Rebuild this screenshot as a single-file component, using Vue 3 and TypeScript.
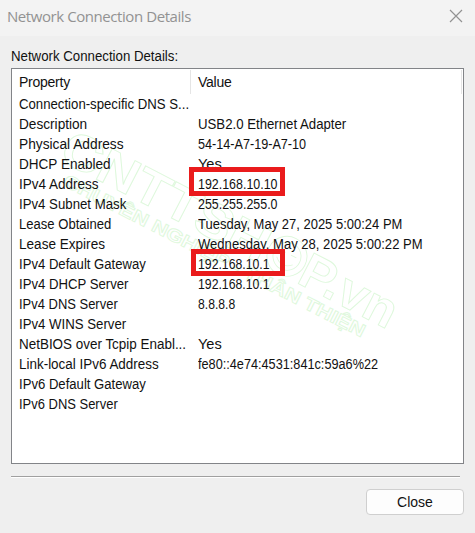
<script setup lang="ts">
interface Cell {
  text: string
  stretch: number
}

interface Detail {
  property: Cell
  value: Cell
}

const cell = (text: string, stretch = 1): Cell => ({ text, stretch })

const details: Detail[] = [
  { property: cell('Connection-specific DNS S...', 0.942), value: cell('') },
  { property: cell('Description', 0.974), value: cell('USB2.0 Ethernet Adapter', 0.943) },
  { property: cell('Physical Address', 0.981), value: cell('54-14-A7-19-A7-10', 0.902) },
  { property: cell('DHCP Enabled', 0.968), value: cell('Yes', 1.04) },
  { property: cell('IPv4 Address', 0.965), value: cell('192.168.10.10', 0.888) },
  { property: cell('IPv4 Subnet Mask', 0.944), value: cell('255.255.255.0', 0.888) },
  { property: cell('Lease Obtained', 0.933), value: cell('Tuesday, May 27, 2025 5:00:24 PM', 0.928) },
  { property: cell('Lease Expires', 0.969), value: cell('Wednesday, May 28, 2025 5:00:22 PM', 0.933) },
  { property: cell('IPv4 Default Gateway', 0.937), value: cell('192.168.10.1', 0.875) },
  { property: cell('IPv4 DHCP Server', 0.94), value: cell('192.168.10.1', 0.875) },
  { property: cell('IPv4 DNS Server', 0.926), value: cell('8.8.8.8', 0.868) },
  { property: cell('IPv4 WINS Server', 0.944), value: cell('') },
  { property: cell('NetBIOS over Tcpip Enabl...', 0.96), value: cell('Yes', 1.04) },
  { property: cell('Link-local IPv6 Address', 0.96), value: cell('fe80::4e74:4531:841c:59a6%22', 0.907) },
  { property: cell('IPv6 Default Gateway', 0.937), value: cell('') },
  { property: cell('IPv6 DNS Server', 0.926), value: cell('') },
]
</script>

<template>
  <main class="dialog">
    <header class="titlebar">
      <h1 class="title">Network Connection Details</h1>
      <button class="dismiss" aria-label="Close window">
        <svg width="14" height="14" viewBox="0 0 14 14">
          <path d="M1 1L13 13M13 1L1 13" fill="none" stroke="#929292" stroke-width="1.2" />
        </svg>
      </button>
    </header>
    <section class="body">
      <p class="label">Network Connection Details:</p>
      <div class="list">
        <svg class="watermark" width="451" height="394" viewBox="12 69 451 394">
          <g fill="none" stroke="#def8dc" stroke-width="0.9">
            <g transform="translate(57 159) rotate(27.3)" class="brand">
              <text x="0" y="0" font-size="50" textLength="228" lengthAdjust="spacingAndGlyphs">CNTTSH</text>
              <circle cx="249" cy="-19" r="20" />
              <circle cx="249" cy="-19" r="14" />
              <path d="M240 -22h6M252 -22h6M240 -14q9 9 18 0" />
              <text x="268" y="0" font-size="50" textLength="104" lengthAdjust="spacingAndGlyphs">P.vn</text>
            </g>
            <g transform="translate(62 185) rotate(27)" class="brand">
              <text x="0" y="0" font-size="18" textLength="336" lengthAdjust="spacingAndGlyphs">CHUYÊN NGHIỆP - THÂN THIỆN</text>
            </g>
          </g>
        </svg>
        <div class="columns">
          <span class="head">Property</span>
          <span class="head">Value</span>
        </div>
        <div v-for="item in details" :key="item.property.text" class="row">
          <span :style="{ transform: `scaleX(${item.property.stretch})` }">{{ item.property.text }}</span>
          <span :style="{ transform: `scaleX(${item.value.stretch})` }">{{ item.value.text }}</span>
        </div>
        <i class="mark address"></i>
        <i class="mark gateway"></i>
      </div>
      <hr class="divider" />
      <footer class="actions">
        <button class="close">Close</button>
      </footer>
    </section>
  </main>
</template>

<style>
body {
  margin: 0;
  background: #efefef;
}
</style>

<style scoped>
.dialog {
  box-sizing: border-box;
  width: 475px;
  height: 533px;
  overflow: hidden;
  background: #efefef;
  color: #111;
  font: 14px/20px "Liberation Sans", Arial, sans-serif;
}
.titlebar {
  display: flex;
  box-sizing: border-box;
  height: 36px;
  padding: 0 12px 5px 7px;
  align-items: center;
  justify-content: space-between;
  background: #f3f3f3;
}
.title {
  margin: 0;
  color: #929292;
  font: 400 15px/20px "Open Sans", "Noto Sans", sans-serif;
  letter-spacing: -0.43px;
}
.dismiss {
  display: flex;
  padding: 0;
  border: 0;
  background: none;
}
.body {
  padding: 10px 11px 0;
}
.label {
  margin: 0 0 2px;
  transform: scaleX(0.946);
  transform-origin: 0 50%;
}
.list {
  position: relative;
  box-sizing: border-box;
  width: 453px;
  height: 396px;
  border: 1px solid #828488;
  background: #fff;
}
.columns,
.row {
  position: relative;
  display: grid;
  grid-template-columns: 179px 1fr;
}
.columns {
  height: 24px;
  margin: 1px 1px 0 0;
}
.row span,
.head {
  padding-left: 7px;
  white-space: nowrap;
}
.row span {
  transform-origin: 7px 50%;
}
.head {
  height: 24px;
  line-height: 25px;
  letter-spacing: -0.25px;
  border-right: 1px solid #e5e5e5;
}
.row {
  height: 20px;
}
.watermark {
  position: absolute;
  top: 0;
  left: 0;
}
.brand {
  font-family: "Liberation Sans", Arial, sans-serif;
  font-weight: 700;
}
.mark {
  position: absolute;
  box-sizing: border-box;
  border: 5px solid #ea1b1c;
}
.address {
  left: 177px;
  top: 98px;
  width: 96px;
  height: 29px;
}
.gateway {
  left: 179px;
  top: 180px;
  width: 94px;
  height: 27px;
}
.divider {
  height: 1px;
  margin: 12px 4px 0 0;
  border: 0;
  border-top: 1px solid #a0a0a0;
  background: #fff;
}
.actions {
  display: flex;
  justify-content: flex-end;
  padding-top: 11px;
}
.close {
  width: 98px;
  height: 26px;
  padding: 0;
  border: 1px solid #cfcfcf;
  border-radius: 4px;
  background: #fdfdfd;
  color: #111;
  font: inherit;
}
</style>
